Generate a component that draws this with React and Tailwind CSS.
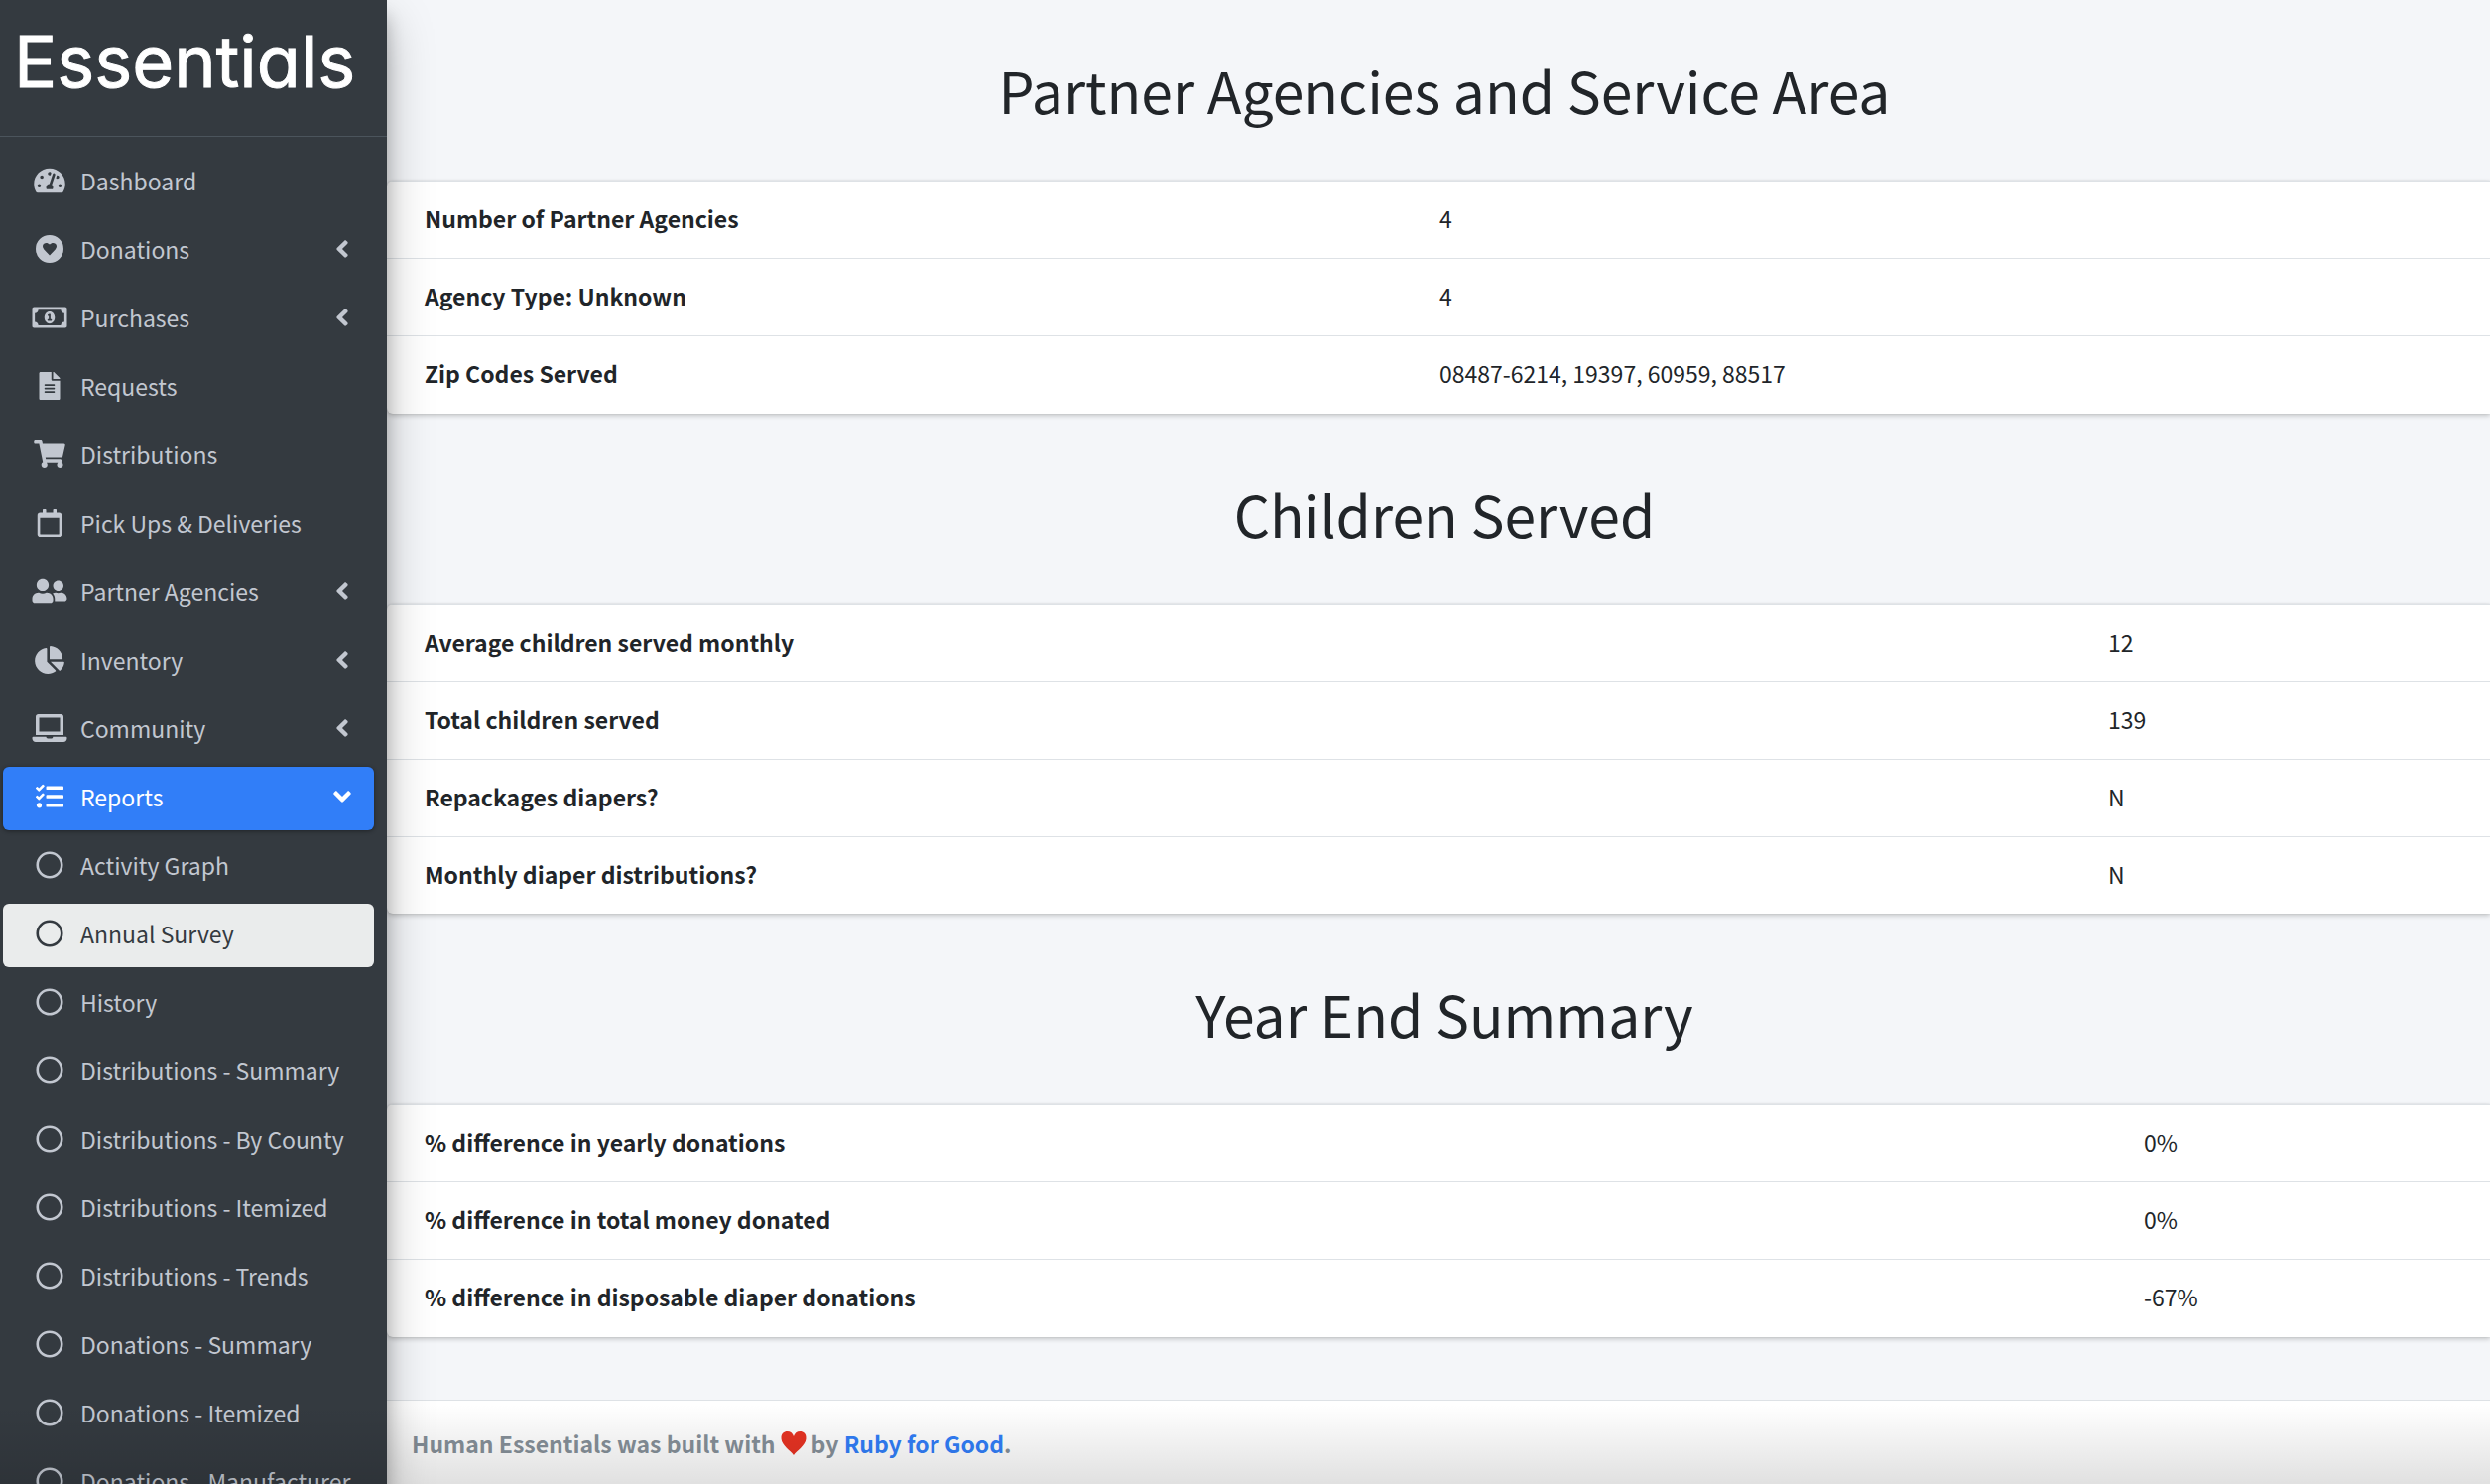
import React from "react";
import {
  FaTachometerAlt, FaRegMoneyBillAlt, FaFileAlt, FaShoppingCart, FaRegCalendar,
  FaUserFriends, FaChartPie, FaLaptop, FaTasks, FaRegCircle, FaAngleLeft, FaAngleDown,
} from "react-icons/fa";

function HeartCircle({ className }) {
  return (
    <svg viewBox="0 0 28 28" className={className} fill="currentColor" aria-hidden="true">
      <path
        fillRule="evenodd"
        d="M14 0a14 14 0 1 0 0 28a14 14 0 1 0 0-28zM14 20.6L8.3 14.4C6.5 12.4 6.600 10 8.300 8.700C10 7.400 12.300 7.700 14 9.600C15.700 7.700 18 7.400 19.700 8.700C21.400 10 21.500 12.400 19.700 14.400z"
      />
    </svg>
  );
}

const NAV = [
  { label: "Dashboard", Icon: FaTachometerAlt, size: "w-8" },
  { label: "Donations", Icon: HeartCircle, size: "w-7", more: true },
  { label: "Purchases", Icon: FaRegMoneyBillAlt, size: "w-9", more: true },
  { label: "Requests", Icon: FaFileAlt, size: "w-7" },
  { label: "Distributions", Icon: FaShoppingCart, size: "w-8" },
  { label: "Pick Ups & Deliveries", Icon: FaRegCalendar, size: "w-7" },
  { label: "Partner Agencies", Icon: FaUserFriends, size: "w-9", more: true },
  { label: "Inventory", Icon: FaChartPie, size: "w-[30px]", more: true },
  { label: "Community", Icon: FaLaptop, size: "w-9", more: true },
  { label: "Reports", Icon: FaTasks, size: "w-7", open: true },
];

const REPORTS = [
  "Activity Graph", "Annual Survey", "History", "Distributions - Summary",
  "Distributions - By County", "Distributions - Itemized", "Distributions - Trends",
  "Donations - Summary", "Donations - Itemized", "Donations - Manufacturer",
];

const SECTIONS = [
  {
    title: "Partner Agencies and Service Area",
    col: "w-[49.1%]",
    rows: [
      ["Number of Partner Agencies", "4"],
      ["Agency Type: Unknown", "4"],
      ["Zip Codes Served", "08487-6214, 19397, 60959, 88517"],
    ],
  },
  {
    title: "Children Served",
    col: "w-[80.9%]",
    rows: [
      ["Average children served monthly", "12"],
      ["Total children served", "139"],
      ["Repackages diapers?", "N"],
      ["Monthly diaper distributions?", "N"],
    ],
  },
  {
    title: "Year End Summary",
    col: "w-[82.6%]",
    rows: [
      ["% difference in yearly donations", "0%"],
      ["% difference in total money donated", "0%"],
      ["% difference in disposable diaper donations", "-67%"],
    ],
  },
];

function NavItem({ label, Icon, size, more, open, current }) {
  const tone = open
    ? "bg-[#317ef8] text-white shadow-[0_1px_4px_rgba(0,0,0,0.4)]"
    : current
      ? "bg-[#eaecec] text-[#343a40]"
      : "text-[#c2c7d0]";
  return (
    <li>
      <a href="#" aria-current={current ? "page" : undefined} className={`flex h-16 items-center rounded-md pb-1 pl-6 pr-[18px] ${tone}`}>
        <span className="flex w-[46px] shrink-0 justify-center">
          <Icon className={`h-7 ${size}`} />
        </span>
        <span className="grow whitespace-nowrap pl-2">{label}</span>
        {more && <FaAngleLeft className="size-7" />}
        {open && <FaAngleDown className="size-7" />}
      </a>
    </li>
  );
}

export default function App() {
  return (
    <div className="relative flex h-screen overflow-hidden bg-[#f4f6f9] text-[23px] leading-[38px] text-[#212529] [font-family:'Noto_Sans_CJK_SC',sans-serif]">
      <aside className="z-10 w-[390px] shrink-0 overflow-hidden bg-[#343a40] shadow-[0_22px_44px_rgba(0,0,0,0.25),0_16px_16px_rgba(0,0,0,0.22)]">
        <a href="#" className="flex h-[138px] items-start border-b border-[#4b545c] px-[14px] pt-4 text-[72px] leading-[92px] text-white [-webkit-text-stroke:1px_white] [font-family:Inter,sans-serif] [font-feature-settings:'cv11']">
          Essentials
        </a>
        <nav className="pl-[3px] pr-[13px] pt-[14px]">
          <ul className="flex flex-col gap-[5px]">
            {NAV.map((item) => <NavItem key={item.label} {...item} />)}
            {REPORTS.map((label) => (
              <NavItem key={label} label={label} Icon={FaRegCircle} size="w-7" current={label === "Annual Survey"} />
            ))}
          </ul>
        </nav>
      </aside>

      <main className="flex min-w-0 grow flex-col">
        {SECTIONS.map(({ title, col, rows }) => (
          <section key={title} className="mb-[10px]">
            <h1 className="flex h-[182px] items-center justify-center pb-0.5 pl-3 text-[57px] leading-[70px]">{title}</h1>
            <div className="overflow-hidden rounded-l-md bg-white shadow-[0_0_2px_rgba(0,0,0,0.13),0_2px_5px_rgba(0,0,0,0.2)]">
              <table className="w-full table-fixed border-collapse">
                <tbody>
                  {rows.map(([label, value]) => (
                    <tr key={label} className="h-[78px] border-t border-[#dee2e6]">
                      <th scope="row" className={`pb-[3px] pl-[38px] text-left font-bold ${col}`}>{label}</th>
                      <td className="pb-[3px] pl-5">{value}</td>
                    </tr>
                  ))}
                </tbody>
              </table>
            </div>
          </section>
        ))}
        <footer className="mt-[53px] grow border-t border-[#dee2e6] bg-white px-[25px] pt-6 font-bold text-[#869099]">
          <p className="flex items-center">
            Human Essentials was built with
            <svg viewBox="0 0 28 26" className="mx-1 h-6 w-7" fill="#e73323" role="img" aria-label="love">
              <path d="M14 26C11 21 1 15.500 0.500 8C0 2.500 3.500 0 7 0C10.500 0 13 2 14 5.500C15 2 17.500 0 21 0C24.500 0 28 2.500 27.500 8C27 15.500 17 21 14 26z" />
            </svg>
            by&nbsp;<a href="#" className="text-[#317ef8]">Ruby for Good</a>.
          </p>
        </footer>
      </main>
      <div className="pointer-events-none absolute inset-x-0 bottom-0 z-20 h-20 bg-linear-to-b from-transparent to-black/12" />
    </div>
  );
}
